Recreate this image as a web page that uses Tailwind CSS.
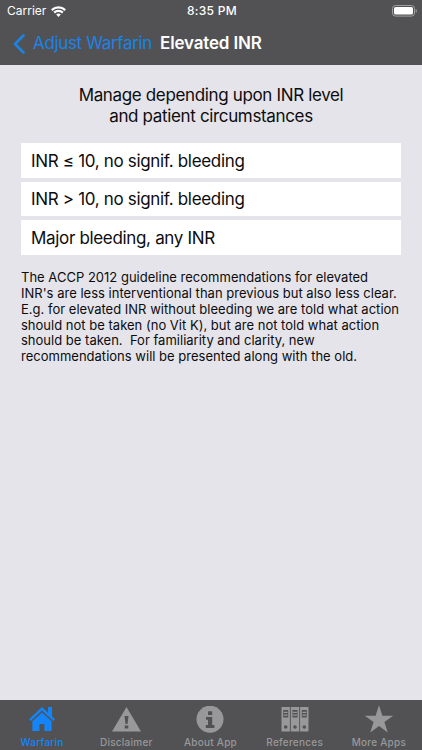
<!DOCTYPE html>
<html lang="en">
<head>
    <meta charset="UTF-8">
    <meta name="viewport" content="width=device-width, initial-scale=1.0">
    <title>Elevated INR</title>
    <script src="https://cdn.jsdelivr.net/npm/@tailwindcss/browser@4"></script>
</head>
<body class="bg-[#e5e4ea] font-['Inter',sans-serif] h-[750px] flex flex-col overflow-hidden text-[#0c0c0e]">

    <!-- Header -->
    <header class="bg-[#525254] text-white h-[65px] shrink-0 flex flex-col">
        <!-- Status bar -->
        <div class="grid grid-cols-3 items-center h-[22px] pl-[7px] pr-[5px] text-[12px]">
            <div class="flex items-center gap-[5px]">
                <span>Carrier</span>
                <svg class="w-[15px] h-[11px]" viewBox="0 0 15 11" fill="none" stroke="white" stroke-width="2.2">
                    <path d="M0.8 4.1a9.6 9.6 0 0 1 13.4 0"/>
                    <path d="M3.2 6.6a6.1 6.1 0 0 1 8.6 0"/>
                    <path d="M7.5 11L5.2 8.6a3.3 3.3 0 0 1 4.6 0z" fill="white" stroke="none"/>
                </svg>
            </div>
            <span class="text-center font-medium tracking-[0.3px] whitespace-nowrap">8:35 PM</span>
            <svg class="w-[25px] h-[12px] justify-self-end" viewBox="0 0 25 12">
                <rect x="0.5" y="0.5" width="22" height="10.6" rx="3" fill="none" stroke="#a0a0a2"/>
                <rect x="2" y="2" width="19" height="7.6" rx="1.6" fill="white"/>
                <path d="M23.7 4v3.8q1.2-.6 1.2-1.9T23.7 4z" fill="#a0a0a2"/>
            </svg>
        </div>
        <!-- Navigation bar -->
        <nav class="flex items-center h-[43px] pl-[13px] whitespace-nowrap">
            <a href="#" class="flex items-center text-[#1b82e6]">
                <svg class="w-[12px] h-[20px] mr-[8px]" viewBox="0 0 12 20" fill="none" stroke="currentColor" stroke-width="2.6" stroke-linecap="round" stroke-linejoin="round">
                    <path d="M10.5 1.5L2 10l8.5 8.5"/>
                </svg>
                <span class="text-[17px] w-[119px] tracking-[-0.34px]">Adjust Warfarin</span>
            </a>
            <h1 class="ml-[8px] text-[17px] font-semibold tracking-[-0.16px]">Elevated INR</h1>
        </nav>
    </header>

    <!-- Content -->
    <main class="flex-1 px-[21px] pt-[20px]">
        <h2 class="text-center text-[17px] leading-[20.5px] tracking-[-0.35px]">Manage depending upon INR level<br>and patient circumstances</h2>
        <ul class="mt-[17px] space-y-[4px] text-[17px] tracking-[-0.33px]">
            <li class="bg-white h-[34.6px] pt-[2px] pl-[10px] flex items-center">INR ≤ 10, no signif. bleeding</li>
            <li class="bg-white h-[34.6px] pt-[2px] pl-[10px] flex items-center">INR &gt; 10, no signif. bleeding</li>
            <li class="bg-white h-[34.6px] pt-[2px] pl-[10px] flex items-center">Major bleeding, any INR</li>
        </ul>
        <p class="mt-[15.4px] text-[13px] leading-[15.8px] tracking-[0.01px] whitespace-pre">The ACCP 2012 guideline recommendations for elevated
INR's are less interventional than previous but also less clear.
E.g. for elevated INR without bleeding we are told what action
should not be taken (no Vit K), but are not told what action
should be taken.  For familiarity and clarity, new
recommendations will be presented along with the old.</p>
    </main>

    <!-- Tab bar -->
    <footer class="bg-[#525254] text-[#98989a] h-[50px] shrink-0 grid grid-cols-5 pr-[1px] text-[10px] font-medium tracking-[0.25px] leading-[12px]">
        <a href="#" class="flex flex-col items-center pt-[6px] text-[#1485f8]">
            <svg class="w-[28px] h-[28px] mb-[2px]" viewBox="0 0 28 28" fill="currentColor">
                <path d="M14 1L1 13.3l1.6 1.6L14 4.4l11.4 10.5 1.6-1.6-3-2.8V1h-4v5.7z"/>
                <path d="M14 6.4L4.4 15.2V25h7v-7h5v7h7.2v-9.8z"/>
            </svg>
            <span>Warfarin</span>
        </a>
        <a href="#" class="flex flex-col items-center pt-[6px]">
            <svg class="w-[29px] h-[28px] mb-[2px]" viewBox="0 0 29 28">
                <path d="M14.5 1L29 25.5H0z" fill="currentColor"/>
                <path d="M12.5 10h4l-1 8h-2zM12.7 19.5h3.6v3h-3.6z" fill="#525254"/>
            </svg>
            <span>Disclaimer</span>
        </a>
        <a href="#" class="flex flex-col items-center pt-[6px]">
            <svg class="w-[28px] h-[28px] mb-[2px]" viewBox="0 0 28 28">
                <circle cx="14" cy="13.2" r="13.5" fill="currentColor"/>
                <path d="M12 5.2h4.2v3.9H12zM10 11h6.2v8.1h2.2v2.8H9.8v-2.8H12v-5.3h-2z" fill="#525254"/>
            </svg>
            <span>About App</span>
        </a>
        <a href="#" class="flex flex-col items-center pt-[6px]">
            <svg class="w-[28px] h-[28px] mb-[2px]" viewBox="0 0 28 28">
                <path d="M0.5 1h8.4v24.5H.5zM9.8 1h8.4v24.5H9.8zM19.1 1h8.4v24.5h-8.4z" fill="currentColor"/>
                <path d="M2.2 4h5v7.5h-5zM11.5 4h5v7.5h-5zM20.8 4h5v7.5h-5z" fill="#525254"/>
                <path d="M2.8 6.4h3.8M2.8 9.1h3.8M12.1 6.4h3.8M12.1 9.1h3.8M21.4 6.4h3.8M21.4 9.1h3.8" stroke="currentColor" stroke-width="1.2"/>
                <g fill="#525254">
                    <circle cx="4.7" cy="21" r="1.8"/>
                    <circle cx="14" cy="21" r="1.8"/>
                    <circle cx="23.3" cy="21" r="1.8"/>
                </g>
            </svg>
            <span>References</span>
        </a>
        <a href="#" class="flex flex-col items-center pt-[6px]">
            <svg class="w-[28px] h-[28px] mb-[2px] overflow-visible" viewBox="0 0 28 28" fill="currentColor">
                <path d="M14-.8l3.4 10.5H28.2l-8.8 6.4 3.3 10.3L14 20l-8.7 6.4 3.3-10.3L-.2 9.7h10.8z"/>
            </svg>
            <span>More Apps</span>
        </a>
    </footer>

</body>
</html>
